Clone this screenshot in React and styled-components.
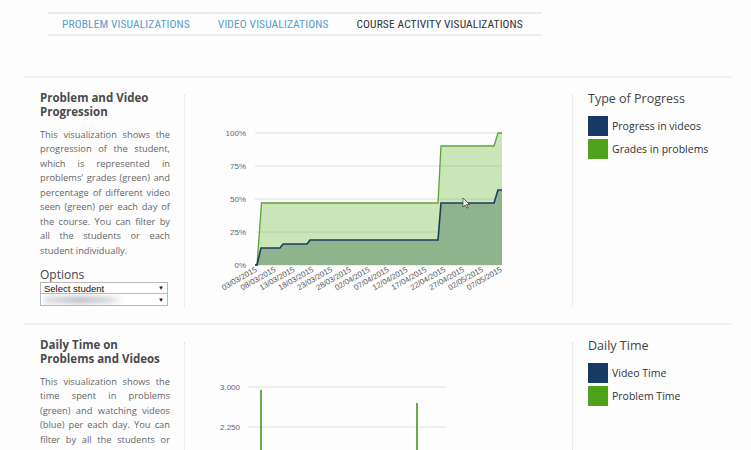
import React from 'react'
import styled, { createGlobalStyle } from 'styled-components'

const GlobalStyle = createGlobalStyle`
  body {
    margin: 0;
    background: #fdfdfe;
    font-family: "Open Sans", "DejaVu Sans", sans-serif;
    overflow: hidden;
  }
`

const Page = styled.div`
  padding-top: 12px;
  width: 751px;
  height: 450px;
  box-sizing: border-box;
  overflow: hidden;
`

const TabBar = styled.nav`
  margin-left: 48px;
  width: 494px;
  height: 24px;
  box-sizing: border-box;
  display: flex;
  align-items: center;
  gap: 28px;
  padding: 0 14px;
  border-top: 2px solid #ebebed;
  border-bottom: 2px solid #eeeef0;
`

const Tab = styled.a`
  font-family: "Liberation Sans Narrow", "Roboto Condensed", "Liberation Sans", sans-serif;
  font-size: 11.5px;
  letter-spacing: 0.1px;
  color: ${p => (p.$active ? '#333' : '#5a9ec9')};
  white-space: nowrap;
  cursor: pointer;
`

const Main = styled.main`
  margin: 40px 0 0 24px;
  width: 708px;
`

const Section = styled.section`
  display: flex;
  height: 245px;
  border-top: 2px solid #f1f1f4;
`

const Info = styled.div`
  flex: none;
  width: 130px;
  padding: 13px 14px 0 16px;
`

const Title = styled.h3`
  margin: 0;
  font-size: 11.5px;
  line-height: 14px;
  font-weight: 700;
  color: #4a4a4a;
`

const Text = styled.p`
  margin: 8.5px 0 0;
  font-size: 9.3px;
  line-height: 14.5px;
  text-align: justify;
  color: #666;
`

const OptionsLabel = styled.div`
  margin-top: 10px;
  font-size: 12px;
  line-height: 14px;
  color: #444;
`

const Select = styled.div`
  width: 128px;
  height: 12px;
  box-sizing: border-box;
  display: flex;
  align-items: center;
  justify-content: space-between;
  padding: 0 3px;
  border: 1px solid ${p => (p.$focused ? '#a9bcd6' : '#b8b8b8')};
  border-top-width: ${p => (p.$focused ? '0' : '1px')};
  background: #fff;
  font-family: "Liberation Sans", Arial, sans-serif;
  font-size: 9.5px;
  color: #111;
  overflow: hidden;
`

const Arrow = styled.span`
  font-size: 6px;
  color: #222;
`

const Blurred = styled.span`
  width: 80px;
  height: 8px;
  background: linear-gradient(to right, #e2e4ea, #c4c6cc 45%, #dcdde2 80%, #fff);
  filter: blur(2px);
`

const Divider = styled.div`
  flex: none;
  border-left: 1px dotted #dedee2;
  margin: 17px 0 16px;
`

const Chart = styled.div`
  flex: none;
  width: 387px;
  overflow: hidden;
`

const Legend = styled.div`
  flex: 1;
  padding: 13px 0 0 15px;
`

const LegendTitle = styled.div`
  font-size: 12.5px;
  line-height: 16px;
  color: #444;
  margin-bottom: 9px;
`

const LegendItem = styled.div`
  display: flex;
  align-items: center;
  gap: 4px;
  margin-bottom: 3px;
  font-size: 10.5px;
  color: #333;
`

const Swatch = styled.span`
  width: 20px;
  height: 20px;
  background: ${p => p.$color};
`

const NAVY = '#163a63'
const GREEN = '#4ea21c'

const grades = [[255, 265], [257, 265], [261.5, 203], [438, 203], [441, 146], [494, 146], [498, 133], [502, 133]]
const videos = [[255, 265], [257, 265], [261, 248], [280, 248], [283, 244], [307, 244], [310, 240], [438, 240], [441, 203], [494, 203], [498, 190], [502, 190]]
const dates = ['03/03/2015', '08/03/2015', '13/03/2015', '18/03/2015', '23/03/2015', '28/03/2015', '02/04/2015', '07/04/2015', '12/04/2015', '17/04/2015', '22/04/2015', '27/04/2015', '02/05/2015', '07/05/2015']

const line = pts => pts.map(p => p.join(',')).join(' ')
const area = pts => line([...pts, [502, 265], [255, 265]])

const ProgressChart = () => (
  <svg width="387" height="243">
    {/* drawn in page coordinates */}
    <g transform="translate(-185 -78)" fontFamily="Liberation Sans, Arial, sans-serif">
      {[133, 166, 199, 232, 265].map((y, i) => (
        <g key={y}>
          <line x1="255" x2="502" y1={y} y2={y} stroke="#dedede" strokeWidth="1" />
          <text x="246" y={y + 3} fontSize="8" fill="#666" textAnchor="end">
            {['100%', '75%', '50%', '25%', '0%'][i]}
          </text>
        </g>
      ))}
      <polygon points={area(grades)} fill="rgba(110,185,60,0.36)" />
      <polygon points={area(videos)} fill="#8fb38d" />
      <polyline points={line(grades)} fill="none" stroke="#5da535" strokeWidth="1.3" />
      <polyline points={line(videos)} fill="none" stroke="#1c3d5c" strokeWidth="1.6" />
      {dates.map((d, i) => {
        const x = 257.5 + i * 18.85
        return (
          <text key={d} x={x} y="271" fontSize="7.8" fill="#555" textAnchor="end" transform={`rotate(-30 ${x} 271)`}>
            {d}
          </text>
        )
      })}
      <path d="M463 198 l0 9 l2.2 -2 l1.6 3.2 l1.3 -0.6 l-1.6 -3.1 l3 0 z" fill="#fff" stroke="#333" strokeWidth="0.7" />
    </g>
  </svg>
)

const TimeChart = () => (
  <svg width="387" height="140">
    <g transform="translate(-185 -325)" fontFamily="Liberation Sans, Arial, sans-serif">
      {[[387, '3.000'], [427, '2.250']].map(([y, t]) => (
        <g key={t}>
          <line x1="248" x2="446" y1={y} y2={y} stroke="#e0e0e0" strokeWidth="1" />
          <text x="240" y={y + 3} fontSize="8" fill="#666" textAnchor="end">{t}</text>
        </g>
      ))}
      <rect x="260" y="390" width="2" height="80" fill="#6aab45" />
      <rect x="416" y="403" width="2" height="70" fill="#6aab45" />
    </g>
  </svg>
)

export default function App() {
  return (
    <Page>
      <GlobalStyle />
      <TabBar>
        <Tab>PROBLEM VISUALIZATIONS</Tab>
        <Tab>VIDEO VISUALIZATIONS</Tab>
        <Tab $active>COURSE ACTIVITY VISUALIZATIONS</Tab>
      </TabBar>
      <Main>
        <Section>
          <Info>
            <Title>Problem and Video Progression</Title>
            <Text>
              This visualization shows the progression of the student, which is represented in
              problems' grades (green) and percentage of different video seen (green) per each day
              of the course. You can filter by all the students or each student individually.
            </Text>
            <OptionsLabel>Options</OptionsLabel>
            <Select>Select student<Arrow>▼</Arrow></Select>
            <Select $focused><Blurred /><Arrow>▼</Arrow></Select>
          </Info>
          <Divider />
          <Chart><ProgressChart /></Chart>
          <Divider />
          <Legend>
            <LegendTitle>Type of Progress</LegendTitle>
            <LegendItem><Swatch $color={NAVY} />Progress in videos</LegendItem>
            <LegendItem><Swatch $color={GREEN} />Grades in problems</LegendItem>
          </Legend>
        </Section>
        <Section>
          <Info>
            <Title>Daily Time on Problems and Videos</Title>
            <Text>
              This visualization shows the time spent in problems (green) and watching videos
              (blue) per each day. You can filter by all the students or each student individually.
            </Text>
          </Info>
          <Divider />
          <Chart><TimeChart /></Chart>
          <Divider />
          <Legend>
            <LegendTitle>Daily Time</LegendTitle>
            <LegendItem><Swatch $color={NAVY} />Video Time</LegendItem>
            <LegendItem><Swatch $color={GREEN} />Problem Time</LegendItem>
          </Legend>
        </Section>
      </Main>
    </Page>
  )
}
